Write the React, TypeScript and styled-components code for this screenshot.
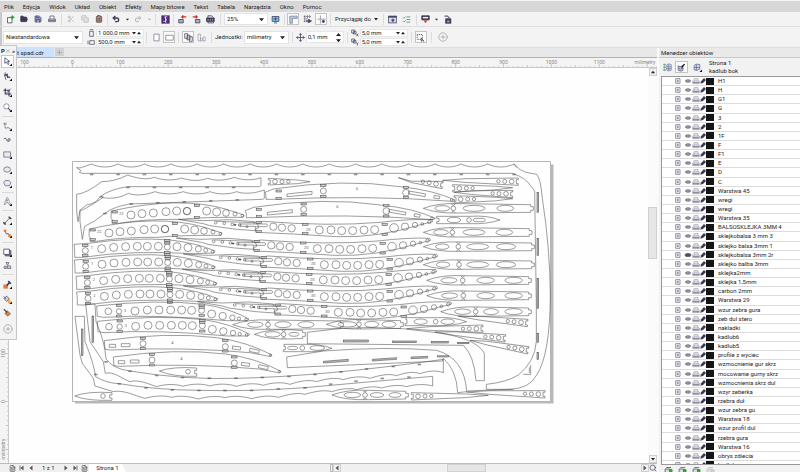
import React from "react";
import styled, { createGlobalStyle, css } from "styled-components";
import {
  FolderOpen, Save, Scissors, Copy, ClipboardList, Undo2, Redo2,
  ListChecks, CirclePlus, Search, Plus, X, Move, FileText,
} from "lucide-react";

const ink = "#3b3b58";

const GlobalStyle = createGlobalStyle`
  * { box-sizing: border-box; }
  html, body, #root { height: 100%; }
  body { margin: 0; overflow: hidden; }
  body, button, input, select { font-family: Roboto, "Liberation Sans", sans-serif; font-size: 6px; line-height: 8px; color: #1c1c1c; }
  button, input, select { margin: 0; padding: 0; border: 0; background: none; border-radius: 0; outline: 0; }
  svg { display: block; flex: none; }
  ul { list-style: none; margin: 0; padding: 0; }
`;

const Shell = styled.div`
  height: 100vh;
  display: flex;
  flex-direction: column;
  background: #f2f2f2;
`;
const MenuBar = styled.nav`
  display: flex;
  align-items: center;
  flex: none;
  gap: 9px;
  height: 12px;
  padding-left: 4px;
  border-top: 1px solid #f4f4f4;
  background: #d7d7d7;
`;
const MenuLink = styled.a`
  color: #1c1c1c;
  text-decoration: none;
  white-space: nowrap;
`;
const Bar = styled.div<{ $h: number }>`
  display: flex;
  align-items: center;
  flex: none;
  height: ${(p) => p.$h}px;
  padding-left: 3px;
  border-bottom: 1px solid #dedede;
  background: #f3f3f3;
`;
const Group = styled.div<{ $gap?: number; $w?: number; $ml?: number }>`
  display: flex;
  align-items: center;
  flex: none;
  gap: ${(p) => p.$gap ?? 0}px;
  width: ${(p) => (p.$w ? `${p.$w}px` : "auto")};
  margin-left: ${(p) => p.$ml ?? 0}px;
`;
const Stack = styled.div`
  display: flex;
  flex-direction: column;
  flex: none;
  gap: 1px;
`;
const Grip = styled.span`
  width: 2px;
  height: 100%;
  margin-left: -3px;
  margin-right: 1px;
  background: #c9c9c9;
`;
const Divider = styled.span<{ $m?: number }>`
  flex: none;
  width: 1px;
  height: 11px;
  margin: 0 ${(p) => p.$m ?? 2}px;
  background: #dcdcdc;
`;
const IconButton = styled.button<{ $w?: number; $boxed?: boolean; $dim?: boolean }>`
  display: flex;
  flex: none;
  align-items: center;
  justify-content: center;
  width: ${(p) => p.$w ?? 14}px;
  height: 12px;
  color: ${ink};
  opacity: ${(p) => (p.$dim ? 0.35 : 1)};
  ${(p) => p.$boxed && css`border: 1px solid #c4c4c4; background: #fbfbfb;`}
`;
const SelectBox = styled.label<{ $w: number; $h: number }>`
  display: flex;
  align-items: center;
  flex: none;
  width: ${(p) => p.$w}px;
  height: ${(p) => p.$h}px;
  padding: 0 3px 0 2px;
  border: 1px solid #e3e3e3;
  background: #fff;
  select { appearance: none; flex: 1; min-width: 0; }
`;
const Spin = styled.label<{ $w: number; $h: number }>`
  display: flex;
  align-items: center;
  flex: none;
  width: ${(p) => p.$w}px;
  height: ${(p) => p.$h}px;
  padding: 0 2px 0 1px;
  border: 1px solid #e6e6e6;
  background: #fff;
  input { flex: 1; min-width: 0; width: 10px; }
`;
const Caption = styled.span<{ $m?: number }>`
  flex: none;
  margin: 0 ${(p) => p.$m ?? 3}px;
  white-space: nowrap;
`;
const Main = styled.main`
  display: flex;
  flex: 1;
  min-height: 0;
`;
const DocArea = styled.section`
  position: relative;
  display: flex;
  flex-direction: column;
  flex: 1;
  min-width: 0;
`;
const TabStrip = styled.div`
  display: flex;
  flex: none;
  height: 10px;
  padding-left: 17px;
  background: #e8e8e8;
  border-bottom: 1px solid #7cc4e6;
`;
const DocTab = styled.button`
  width: 37px;
  background: #cbe1ff;
  white-space: nowrap;
  text-align: left;
`;
const AddTab = styled.button`
  display: flex;
  align-items: center;
  justify-content: center;
  width: 9px;
  height: 8px;
  margin-left: 1px;
  background: #d2d2d2;
  color: #999;
`;
const RulerRow = styled.div`
  flex: none;
  height: 10px;
  overflow: hidden;
  background: #f4f4f4;
  border-bottom: 1px solid #c9c9c9;
`;
const WorkRow = styled.div`
  display: flex;
  flex: 1;
  min-height: 0;
`;
const SideRuler = styled.div`
  width: 9px;
  flex: none;
  overflow: hidden;
  background: #f4f4f4;
  border-right: 1px solid #c9c9c9;
`;
const Canvas = styled.div`
  flex: 1;
  min-width: 0;
  overflow: hidden;
  background: #fefefe;
`;
const VScroll = styled.div`
  display: flex;
  flex-direction: column;
  justify-content: space-between;
  align-items: center;
  width: 9px;
  flex: none;
  background: #fbfbfb;
`;
const Thumb = styled.div<{ $vertical?: boolean }>`
  flex: none;
  width: ${(p) => (p.$vertical ? "9px" : "39px")};
  height: ${(p) => (p.$vertical ? "52px" : "8px")};
  background: #e6e6e6;
  border: 1px solid #d0d0d0;
`;
const ScrollButton = styled.button`
  display: flex;
  align-items: center;
  justify-content: center;
  flex: none;
  width: 8px;
  height: 8px;
  border: 1px solid #cfcfcf;
  background: #f1f1f1;
`;
const Spacer = styled.div<{ $grow: number }>`
  flex: ${(p) => p.$grow} 1 0;
`;
const StatusRow = styled.div`
  display: flex;
  flex: none;
  align-items: center;
  height: 9px;
  padding-left: 9px;
  background: #f0f0f0;
  border-top: 1px solid #bcbcbc;
`;
const PageTab = styled.button`
  width: 37px;
  height: 8px;
  background: #fff;
  clip-path: polygon(0 0, 90% 0, 100% 100%, 0 100%);
`;
const Handle = styled.span`
  width: 3px;
  height: 8px;
  border: 1px solid #bbb;
`;
const ToolBox = styled.aside`
  position: absolute;
  left: 0;
  top: -3px;
  display: flex;
  flex-direction: column;
  width: 17px;
  background: #f3f3f3;
  border: 1px solid #c6c6c6;
  border-left: 0;
`;
const ToolHead = styled.div`
  display: flex;
  align-items: center;
  justify-content: space-between;
  height: 9px;
  padding: 0 1px;
  overflow: hidden;
  font-weight: 700;
`;
const ToolButton = styled.button<{ $active?: boolean; $h: number }>`
  display: flex;
  align-items: center;
  justify-content: center;
  width: 13px;
  height: ${(p) => p.$h}px;
  margin-left: 1px;
  color: ${ink};
  ${(p) => p.$active && css`border: 1px solid #c8c8c8; background: #fff;`}
`;
const ToolRule = styled.span`
  height: 1px;
  margin: 2px 2px;
  background: #dadada;
`;
const Docker = styled.aside`
  display: flex;
  flex-direction: column;
  width: 143px;
  flex: none;
  border-left: 2px solid #fafafa;
`;
const DockerTitle = styled.h2`
  flex: none;
  height: 10px;
  margin: 0;
  padding: 1px 2px 0;
  font-size: 6px;
  line-height: 8px;
  font-weight: 400;
  background: #e9e9e9;
  border-bottom: 1px solid #c8c8c8;
`;
const DockerTools = styled.div`
  display: flex;
  align-items: center;
  flex: none;
  gap: 2px;
  height: 18px;
  padding-left: 2px;
`;
const DockerText = styled.div`
  margin-left: 3px;
`;
const LayerClip = styled.div`
  flex: 1;
  min-height: 0;
  margin-left: 2px;
  overflow: hidden;
  border: 1px solid #999;
  border-right: 0;
  background: #fff;
`;
const LayerList = styled.ul`
  display: flex;
  flex-direction: column;
  height: calc(100% + 6px);
`;
const LayerRow = styled.li`
  display: flex;
  align-items: center;
  flex: 1;
  min-height: 0;
  padding-left: 12px;
  border-bottom: 1px solid #dcdcdc;
  white-space: nowrap;
`;
const LayerButton = styled.button`
  display: flex;
  flex: none;
  height: 8px;
  align-items: center;
`;
const Swatch = styled.span`
  width: 8px;
  height: 7px;
  margin-right: 4px;
  background: #151515;
`;
const DockerFoot = styled.div`
  display: flex;
  flex: none;
  gap: 5px;
  height: 7px;
  padding: 1px 0 0 5px;
  overflow: hidden;
`;

type Kids = { children: React.ReactNode; s?: number };
const Glyph = ({ children, s = 9 }: Kids) => (
  <svg width={s} height={s} viewBox="0 0 24 24" fill="none" stroke={ink} strokeWidth={2}>{children}</svg>
);
const Down = ({ s = 5 }: { s?: number }) => (
  <svg width={s} height={s} viewBox="0 0 10 10"><path d="M0 2.500h10L5 8.500z" fill="#222" /></svg>
);
const Up = ({ s = 4 }: { s?: number }) => (
  <svg width={s} height={s} viewBox="0 0 10 10"><path d="M0 8h10L5 2z" fill="#222" /></svg>
);
const Tri = ({ left, bar }: { left?: boolean; bar?: boolean }) => (
  <svg width={6} height={6} viewBox="0 0 12 12">
    <path d={left ? "M9 1v10L3 6z" : "M3 1v10l6-5z"} fill="#555" />
    {bar && <path d={left ? "M2 1v10" : "M10 1v10"} stroke="#555" strokeWidth={1.5} />}
  </svg>
);

function MiniSpin({ label, value, w = 48 }: { label: string; value: string; w?: number }) {
  return (
    <Spin $w={w} $h={8}>
      <input aria-label={label} defaultValue={value} />
      <Group $gap={1}><Down s={4} /><Up s={4} /></Group>
    </Spin>
  );
}

function StandardBar() {
  return (
    <Bar $h={15}>
      <Grip />
      <IconButton aria-label="Nowy"><Glyph><path d="M4 7h12v14H4z" fill="#fff" /><path d="M17 1v10M12 6h10" stroke="#2f9d3c" strokeWidth={4} /></Glyph></IconButton>
      <IconButton aria-label="Otwórz"><FolderOpen size={8} fill={ink} /></IconButton>
      <IconButton aria-label="Zapisz"><Save size={8} fill="#9a9ad0" /></IconButton>
      <IconButton aria-label="Drukuj"><Glyph s={8}><path d="M6 11V3h12v8" fill="#fff" /><path d="M2 12h20v8H2z" fill="#eee" /><path d="M2 16h20" stroke="#222" /></Glyph></IconButton>
      <Divider />
      <IconButton aria-label="Wytnij" $dim><Scissors size={8} /></IconButton>
      <IconButton aria-label="Kopiuj" $dim><Copy size={8} fill="#bbb" /></IconButton>
      <IconButton aria-label="Wklej"><ClipboardList size={8} fill="#b88a62" /></IconButton>
      <Divider $m={1} />
      <IconButton aria-label="Cofnij"><Undo2 size={8} strokeWidth={4} /></IconButton>
      <IconButton aria-label="Lista cofania" $w={8}><Down s={3} /></IconButton>
      <IconButton aria-label="Ponów" $dim><Redo2 size={8} strokeWidth={3} /></IconButton>
      <IconButton aria-label="Lista ponawiania" $w={8} $dim><Down s={3} /></IconButton>
      <Divider />
      <IconButton aria-label="Szukaj zawartości"><Glyph><path d="M1 1h22v22H1z" fill="#4b2a75" stroke="none" /><path d="M17 5c-6-1-8 2-4 5s0 8-7 7M11 3l2 18" stroke="#fff" /></Glyph></IconButton>
      <Divider $m={1} />
      <IconButton aria-label="Importuj"><Glyph><path d="M2 12h12v9H2z" fill="#aab" /><path d="M22 5H11m3-4-4 4 4 4" stroke="#c92d25" strokeWidth={3} /></Glyph></IconButton>
      <IconButton aria-label="Eksportuj"><Glyph><path d="M9 12h12v9H9z" fill="#aab" /><path d="M2 5h11m-3-4 4 4-4 4" stroke="#c92d25" strokeWidth={3} /></Glyph></IconButton>
      <IconButton aria-label="Publikuj jako PDF"><Glyph><path d="M5 2h10l5 5v14H5z" fill="#ddd" /><path d="M1 8h21v9H1z" fill={ink} /><path d="M4 13h3m3 0h3m3 0h3" stroke="#fff" /></Glyph></IconButton>
      <Divider $m={3} />
      <SelectBox $w={44} $h={12}>
        <select aria-label="Powiększenie" defaultValue="25%"><option>25%</option></select><Down />
      </SelectBox>
      <IconButton aria-label="Pełny ekran"><Glyph><path d="M3 4h18v13H3zM8 21h8" fill="#73c3e6" /><path d="M12 6v9M7 10h10" /></Glyph></IconButton>
      <Divider />
      <IconButton aria-label="Linijki" $w={12} $boxed><Glyph><path d="M2 3h20v6H9v13H2z" fill="#b6c5dd" stroke="#7787a2" /></Glyph></IconButton>
      <IconButton aria-label="Siatka" $w={16}><Glyph><path d="M2 4h18M2 10h9M2 16h6M5 1v18M12 1v9M18 1v7" strokeDasharray="3 2" /><path d="M8 16q7-8 15 0-8 8-15 0" fill="#fff" /><circle cx="16" cy="16" r="3" fill={ink} /></Glyph></IconButton>
      <IconButton aria-label="Prowadnice" $w={12} $boxed><Glyph><path d="M9 1v22M1 11h22" stroke="#889" /><circle cx="17" cy="17" r="3" fill={ink} /></Glyph></IconButton>
      <Divider $m={3} />
      <Caption $m={1}>Przyciągaj do</Caption>
      <IconButton aria-label="Lista przyciągania" $w={9}><Down s={4} /></IconButton>
      <Divider $m={2} />
      <IconButton aria-label="Ekran powitalny"><Glyph><path d="M1 3h22v18H1z" fill="#d8d8ed" /><path d="M1 5h22" strokeWidth={4} /><circle cx="13" cy="14" r="3" fill="#57579a" /></Glyph></IconButton>
      <IconButton aria-label="Opcje"><ListChecks size={9} color="#448a53" /></IconButton>
      <Divider $m={2} />
      <IconButton aria-label="Uruchamianie aplikacji"><Glyph><path d="M2 2h20v11H2z" fill={ink} /><path d="M5 5h14v4H5z" fill="#eee" stroke="none" /><path d="M6 14h12l-6 8z" fill="#df4b2d" stroke="none" /></Glyph></IconButton>
      <IconButton aria-label="Lista aplikacji" $w={8}><Down s={3} /></IconButton>
      <IconButton aria-label="Społeczność"><Glyph><path d="M7 10h14v12H7z" fill={ink} /><path d="M4 3h8l6 6M5 20h4M10 15h8" stroke="#667" strokeWidth={3} /><path d="M11 18l6 0" stroke="#fff" /></Glyph></IconButton>
    </Bar>
  );
}

function PropertyBar() {
  return (
    <Bar $h={21}>
      <Grip />
      <SelectBox $w={80} $h={13}>
        <select aria-label="Rozmiar strony" defaultValue="n"><option value="n">Niestandardowa</option></select><Down />
      </SelectBox>
      <Group $gap={1} $ml={4}>
        <Stack>
          <Glyph s={8}><path d="M8 7h11v15H8zM8 2h11" /></Glyph>
          <Glyph s={8}><path d="M8 8h14v11H8zM3 8v11" /></Glyph>
        </Stack>
        <Stack>
          <MiniSpin label="Szerokość strony" value="1 000,0 mm" />
          <MiniSpin label="Wysokość strony" value="500,0 mm" />
        </Stack>
      </Group>
      <Divider />
      <IconButton aria-label="Pionowo"><Glyph><path d="M5 3h14v18H5z" fill="#fff" stroke="#778" /></Glyph></IconButton>
      <IconButton aria-label="Poziomo" $w={12} $boxed><Glyph><path d="M2 6h20v13H2z" fill="#fff" stroke="#778" /></Glyph></IconButton>
      <Divider $m={3} />
      <IconButton aria-label="Wszystkie strony" $w={12} $boxed><Glyph><path d="M2 2h8v12H2zM8 6h8v12H8zM14 10h8v12h-8z" fill="#fff" /></Glyph></IconButton>
      <IconButton aria-label="Bieżąca strona" $w={15}><Glyph><path d="M3 3h6v18H3zM9 15h6v6H9zM16 11h6v10h-6z" stroke="#99a" fill="#fff" /></Glyph></IconButton>
      <Divider $m={2} />
      <Caption $m={1}>Jednostki:</Caption>
      <SelectBox $w={45} $h={13}>
        <select aria-label="Jednostki" defaultValue="m"><option value="m">milimetry</option></select><Down />
      </SelectBox>
      <Divider $m={3} />
      <Group $gap={1}>
        <Move size={9} color={ink} />
        <Spin $w={38} $h={12}>
          <input aria-label="Przesunięcie" defaultValue="0,1 mm" />
          <Stack><Up s={5} /><Down s={5} /></Stack>
        </Spin>
      </Group>
      <Divider $m={3} />
      <Group $gap={1} $w={57}>
        <Stack>
          <Glyph s={8}><path d="M2 3h9v9H2zM7 7h8v8H7zM16 14l6 8m0-8-6 8" /></Glyph>
          <Glyph s={8}><path d="M2 3h9v9H2zM7 7h8v8H7zM16 14l3 4 3-4m-3 4v5" /></Glyph>
        </Stack>
        <Stack>
          <MiniSpin label="Odległość duplikatu x" value="5,0 mm" />
          <MiniSpin label="Odległość duplikatu y" value="5,0 mm" />
        </Stack>
      </Group>
      <Divider $m={3} />
      <IconButton aria-label="Traktuj jako wypełnione" $w={12} $boxed><Glyph><path d="M3 4h14v13H3z" strokeDasharray="3 2" /><path d="M14 13v9l3-2 4 2z" fill="#fff" /></Glyph></IconButton>
      <Divider $m={4} />
      <IconButton aria-label="Dostosuj"><CirclePlus size={10} color="#a8a8a8" /></IconButton>
    </Bar>
  );
}

const Flyout = () => <path d="M24 17v7h-7z" fill="#111" stroke="none" />;

function Tools() {
  const tools: { n: string; h: number; rule?: boolean; active?: boolean; icon: React.ReactNode }[] = [
    { n: "Wskaźnik", h: 13, active: true, icon: <><path d="M5 2v15l4-4 4 7 3-2-4-6h6z" fill="#fff" /><Flyout /></> },
    { n: "Kształt", h: 16, icon: <><path d="M6 1q-4 9 2 20" /><path d="M4 8l8-3v11l3-3 4 2z" fill="#778" /><Flyout /></> },
    { n: "Kadrowanie", h: 16, icon: <><path d="M6 1v15h16M1 6h15v16" strokeWidth={3} /><path d="m8 15 12-13" /><Flyout /></> },
    { n: "Powiększenie", h: 14, rule: true, icon: <><circle cx="9" cy="9" r="7" fill="#fff" stroke="#778" /><path d="m14 14 7 8" strokeWidth={3} /><Flyout /></> },
    { n: "Krzywa", h: 14, icon: <><path d="M5 1v9M1 5h9M5 11q0 8 5 5t6 0 5 3" stroke="#667" /><Flyout /></> },
    { n: "Środki artystyczne", h: 14, icon: <path d="M2 8q5-6 7 1t7 5q6-2 2-7-6-2-4 7" strokeWidth={2} /> },
    { n: "Prostokąt", h: 15, icon: <><path d="M2 5h18v14H2z" fill="#e9e9f2" stroke="#667" /><Flyout /></> },
    { n: "Elipsa", h: 14, icon: <><ellipse cx="11" cy="12" rx="9" ry="7" fill="#e9e9f2" stroke="#667" /><Flyout /></> },
    { n: "Wielokąt", h: 14, rule: true, icon: <><path d="m6 4 10 0 5 6-4 8H6l-4-8z" fill="#e9e9f2" stroke="#667" /><Flyout /></> },
    { n: "Tekst", h: 13, rule: true, icon: <><path d="M3 20 10 2h3l7 18h-4l-2-5H8l-2 5zM9 11h4l-2-5z" fill="#fff" strokeWidth={1.5} stroke="#667" /><Flyout /></> },
    { n: "Wymiar równoległy", h: 14, icon: <><path d="m3 21 16-17" /><path d="M1 17l6 6M15 2l7 6" strokeWidth={4} /><Flyout /></> },
    { n: "Łącznik", h: 13, rule: true, icon: <><path d="M5 5l4 8 5-1 4 7" /><path d="M2 1h7v7H2zM14 14h7v7h-7z" fill="#ed842b" stroke="none" /><Flyout /></> },
    { n: "Cień", h: 14, icon: <><path d="M6 7h15v14H6z" fill="#889" /><path d="M2 3h15v14H2z" fill="#fff" /><Flyout /></> },
    { n: "Przezroczystość", h: 13, rule: true, icon: <><path d="M8 4h8l-4 8zM3 14h6v6H3zM12 13h8l1 7h-9z" fill="#ccd" stroke="#667" /></> },
    { n: "Kroplomierz", h: 15, icon: <><path d="M1 12h12v11H1z" fill="#ed762b" stroke="none" /><path d="m10 15 9-10M14 3l7 7" strokeWidth={4} /><Flyout /></> },
    { n: "Wypełnienie", h: 14, icon: <><path d="m9 3 8 7-7 7-7-7z" fill="#dde" /><path d="M13 14h7v8h-7z" fill="#f5a92c" stroke="none" /><path d="M2 4l7 7" /><Flyout /></> },
    { n: "Inteligentne wypełnienie", h: 13, icon: <><path d="m11 7 9 8-7 7-8-7z" fill="#e37a2e" stroke="#775" /><path d="M2 3l9 9" strokeWidth={3} /></> },
  ];
  return (
    <ToolBox aria-label="Przybornik">
      <ToolHead><span>P</span><X size={6} color="#888" /><span>»</span></ToolHead>
      {tools.map((t) => (
        <React.Fragment key={t.n}>
          <ToolButton aria-label={t.n} $active={t.active} $h={t.h}><Glyph s={9}>{t.icon}</Glyph></ToolButton>
          {t.rule && <ToolRule />}
        </React.Fragment>
      ))}
      <ToolButton aria-label="Dostosuj przybornik" $h={20}><CirclePlus size={10} color="#a8a8a8" /></ToolButton>
    </ToolBox>
  );
}

const range = (n: number) => Array.from({ length: n }, (_, i) => i);

function TopRuler() {
  return (
    <svg width="100%" height={10} fontSize={5} fill="#888" textAnchor="middle">
      {range(140).map((i) => {
        const x = 24.5 + (i - 4) * 4.79;
        const major = (i - 4) % 10 === 0;
        return <path key={i} d={`M${x} ${major ? 6 : (i - 4) % 5 === 0 ? 7 : 8}v4`} stroke="#b5b5b5" strokeWidth={0.7} />;
      })}
      {range(13).map((i) => <text key={i} x={24.5 + i * 47.9} y={6}>{Math.abs(i - 1) * 100}</text>)}
      <text x={645} y={6}>milimetry</text>
    </svg>
  );
}

function LeftRuler() {
  return (
    <svg width={9} height="100%" fontSize={5} fill="#888" textAnchor="middle">
      {range(84).map((i) => {
        const k = i - 70;
        return <path key={i} d={`M${k % 10 === 0 ? 5 : k % 5 === 0 ? 6 : 7} ${333.5 + k * 4.79}h5`} stroke="#b5b5b5" strokeWidth={0.7} />;
      })}
      {([[285.5, "100"], [333.5, "0"], [381, "milimetry"]] as [number, string][]).map(([y, t]) => (
        <text key={t} transform={`translate(5 ${y}) rotate(-90)`}>{t}</text>
      ))}
    </svg>
  );
}

type Pt = [number, number];
const Holes = ({ at }: { at: [number, number, number][] }) => (
  <>{at.map(([x, y, r]) => <circle key={`${x}-${y}`} cx={x} cy={y} r={r} />)}</>
);
const Boxes = ({ at }: { at: Pt[] }) => (
  <>{at.map(([x, y]) => <rect key={`${x}-${y}`} x={x - 8} y={y - 3} width={16} height={6} fill="#ccc" />)}</>
);
const Notches = ({ at }: { at: Pt[] }) => (
  <>{at.map(([x, y]) => <path key={`${x}-${y}`} d={`M${x - 4} ${y - 2}v4h3v-4m2 0v4h3v-4`} />)}</>
);
const At = ({ p, children }: { p: Pt; children: React.ReactNode }) => <g transform={`translate(${p[0]} ${p[1]})`}>{children}</g>;
const Mark = ({ x, y, t }: { x: number; y: number; t: string }) => <text x={x} y={y} fontSize={12} stroke="none" fill="#666">{t}</text>;

const scallop = (points: Pt[], depth = 9) =>
  points.slice(1).map(([x, y], i) => {
    const [px, py] = points[i];
    const w = x - px;
    return `C${px + w * 0.3} ${py + depth} ${px + w * 0.7} ${y + depth} ${x} ${y}`;
  }).join("");

const NoseRib = ({ p }: { p: Pt }) => (
  <At p={p}>
    <path d="M124 168Q330 122 470 163L522 180 519 187Q400 186 330 193 220 192 145 205L127 206V194L123 190Z" />
    <Holes at={[[183, 180, 12], [216, 176, 12], [250, 174, 12], [288, 170, 12], [320, 168, 12], [351, 168, 11], [351, 168.5, 11], [410, 168, 12], [440, 171, 12], [468, 174, 10], [495, 177, 6], [517, 182, 4]]} />
    <Boxes at={[[134, 171], [134, 200], [381, 152], [381, 187]]} />
    <Mark x={147} y={181} t="22" />
  </At>
);
const WingRib = ({ p, n }: { p: Pt; n: string }) => (
  <At p={p}>
    <path d="M12 268L55 265Q190 246 300 255 380 264 435 288L432 294 372 296Q180 285 38 307H14V290Z" />
    <Holes at={[[46, 287, 9], [95, 281, 12], [131, 277, 12], [167, 275, 12], [202, 274, 12], [232, 274, 12], [265, 274, 12], [292, 276, 9], [321, 275, 12], [354, 278, 12], [385, 282, 9], [407, 286, 6], [428, 290, 4]]} />
    <Boxes at={[[46, 272], [46, 302], [292, 257], [292, 264], [292, 292], [292, 299]]} />
    <Mark x={62} y={282} t={n} />
  </At>
);
const LongRib = ({ p }: { p: Pt }) => (
  <At p={p}>
    <path d="M80 453Q260 432 400 448 480 460 537 492L532 497H470Q260 477 100 487L82 484Z" />
    <Holes at={[[115, 469, 10], [147, 469, 8], [195, 468, 12], [232, 465, 12], [267, 465, 12], [302, 465, 12], [335, 465, 12], [365, 466, 12], [395, 466, 9], [425, 477, 12], [458, 483, 11], [487, 488, 8], [507, 491, 5], [528, 494, 4]]} />
    <Boxes at={[[147, 452], [147, 483], [395, 450], [395, 457], [395, 482]]} />
    <Mark x={162} y={470} t="3" />
  </At>
);
const PlainRib = ({ p }: { p: Pt }) => (
  <At p={p}>
    <path d="M103 557Q290 530 440 548 530 560 606 600L603 605 540 593Q340 575 122 585L105 583Z" />
    <path d="M118 568h19v9h-19zM154 566h26v9h-26zM488 573l24 3-1 9-24-3zM540 580l28 6-2 9-28-6z" />
    <Holes at={[[219, 566, 9], [466, 575, 9], [601, 600, 3]]} />
    <Boxes at={[[219, 550], [219, 581], [466, 557], [466, 588]]} />
    <Mark x={304} y={567} t="4" />
  </At>
);
const BigRib = ({ p }: { p: Pt }) => (
  <At p={p}>
    <path d="M585 112L610 102Q820 70 990 95 1090 105 1155 135L1148 139Q900 120 610 133H588V122Z" />
    <path d="M651 117l75-8v9l-75 7zM1017 108l50 9-2 8-50-9zM1093 121l17 3-2 8-17-3z" />
    <Holes at={[[760, 108, 9], [1008, 113, 10], [1145, 135, 4]]} />
    <Boxes at={[[626, 108], [626, 130], [760, 92], [760, 124], [1008, 97], [1008, 128]]} />
    <Mark x={858} y={105} t="6" />
  </At>
);
const TailRib = ({ p, n }: { p: Pt; n: string }) => (
  <At p={p}>
    <path d="M557 202L580 199Q780 215 930 202 1020 191 1085 194L1088 200 1060 207Q920 250 800 245 670 236 558 232L557 222 565 219V212Z" />
    <Holes at={[[610, 215, 11], [636, 218, 11], [665, 220, 11], [748, 225, 12], [783, 225, 12], [815, 227, 12], [848, 227, 12], [882, 225, 12], [914, 224, 12], [972, 219, 13], [1005, 215, 11], [1035, 210, 8], [1057, 207, 4], [1078, 201, 5]]} />
    <Boxes at={[[566, 203], [566, 230], [706, 208], [706, 236], [944, 209], [944, 238]]} />
    <Mark x={708} y={227} t={n} />
    <path d="M325 193L400 197 480 194 553 200V207H590Q597 211 590 215H556V227L500 223 420 212 400 206Z M553 207H510V214H556M440 199L555 203" />
    <Holes at={[[437, 203, 4], [463, 205, 4], [487, 208, 4], [509, 210, 4], [531, 215, 3]]} />
    <path d="M492 208h6v3h-6z" fill="#555" />
  </At>
);

type LensShape = { tip: number; y: number; end: number; holes: [number, number][]; r?: number };
const Lens = ({ tip, y, end, holes, r = 9 }: LensShape) => (
  <g>
    <path d={`M${tip} ${y}Q${tip + 45} ${y - 17} ${tip + 110} ${y - 14}L${end - 8} ${y - 11}V${y - 5}H${end}V${y + 6}H${end - 8}V${y + 12}L${tip + 110} ${y + 14}Q${tip + 40} ${y + 16} ${tip} ${y}Z`} />
    {holes.map(([x, rx], i) =>
      rx < 9 ? (
        <g key={i}>
          <circle cx={x} cy={y} r={rx} />
          <path d={`M${x - 6} ${y - 13}q6 8 12 0M${x - 6} ${y + 13}q6-8 12 0`} />
        </g>
      ) : (
        <ellipse key={i} cx={x} cy={y} rx={rx} ry={i === 0 ? 8 : r} />
      ),
    )}
  </g>
);
const lenses: LensShape[] = [
  { tip: 1060, y: 160, end: 1390, holes: [[1117, 22], [1150, 7], [1212, 33], [1306, 25]] },
  { tip: 1060, y: 232, end: 1386, holes: [[1113, 22], [1147, 7], [1212, 33], [1303, 25]] },
  { tip: 1060, y: 275, end: 1393, holes: [[1117, 20], [1165, 7], [1223, 33], [1308, 29]] },
  { tip: 1060, y: 329, end: 1393, holes: [[1119, 20], [1167, 7], [1223, 33], [1308, 29]] },
  { tip: 1070, y: 376, end: 1384, holes: [[1137, 24], [1178, 7], [1247, 26], [1331, 26]] },
  { tip: 1070, y: 422, end: 1384, holes: [[1139, 24], [1180, 7], [1247, 26], [1331, 26]] },
  { tip: 1112, y: 470, end: 1384, holes: [[1178, 24], [1217, 7], [1263, 22], [1331, 26]] },
  { tip: 488, y: 509, end: 820, holes: [[556, 23], [594, 7], [639, 24], [708, 24]] },
  { tip: 553, y: 538, end: 706, r: 6, holes: [[608, 23], [641, 7], [672, 15]] },
  { tip: 769, y: 508, end: 1000, holes: [[832, 28], [867, 7], [905, 21], [957, 21]] },
  { tip: 786, y: 720, end: 1015, r: 7, holes: [[847, 25], [885, 7], [921, 20], [975, 18]] },
];

const Taper = ({ a, b, h = 22, flip }: { a: Pt; b: Pt; h?: number; flip?: boolean }) => {
  const deg = (Math.atan2(b[1] - a[1], b[0] - a[0]) * 180) / Math.PI;
  const len = Math.hypot(b[0] - a[0], b[1] - a[1]);
  const k = h / 2;
  return (
    <g transform={`translate(${a[0]} ${a[1]}) rotate(${deg})`}>
      <path d={`M0 0L${len * 0.3} ${flip ? 4 : -6} ${len} ${-k}v5h-6v${h - 10}h6v5L${len * 0.3} ${flip ? 8 : 5}Z`} />
      <Holes at={[[len - 20, 0, 7], [len - 41, 0, 6], [len - 60, 0, 5]]} />
    </g>
  );
};
const Slots = ({ at }: { at: [number, number, number, number][] }) => (
  <>{at.map(([x, y, w, h]) => <rect key={`${x}-${y}`} x={x} y={y} width={w} height={h} fill="#bbb" />)}</>
);

const step = (from: Pt, n: number, dx = 79.2, dy = 0): Pt[] => range(n).map((i) => [from[0] + i * dx, from[1] + i * dy] as Pt);

function Drawing() {
  return (
    <svg width="100%" height="100%" role="img" aria-label="Rysunek części">
      <path d="M66 96.500H544.500V335.500H66z" fill="#b9b9b9" />
      <path d="M63.500 93.500H541.500V333.500H63.500z" fill="#fefefe" stroke="#b5b5b5" strokeWidth={1} />
      <g transform="translate(61 87) scale(.333333)" fill="none" stroke="#484848" strokeWidth={1.6}>
        <path d={`M20 38L30 39 65 27${scallop(step([65, 27], 17), 12)}Q1350 48 1368 52L1400 58Q1412 70 1417 130 1440 280 1441 420 1440 600 1400 660 1380 700 1320 703L1192 708M1332 27L1340 38M20 38L33 47 28 52 36 55H1328Q1370 70 1383 94L1394 108 1399 450V560Q1395 620 1345 660 1310 682 1249 688V703H1330`} />
        <Notches at={step([65, 58], 17)} />

        <path d={`M173 60${scallop([[173, 60], [253, 67], [335, 69], [413, 70], [493, 67], [573, 68]])}V92L568 95H173Q120 103 90 125 80 145 50 150L30 165 24 200 20 170V118Q50 115 95 80 135 80 173 60`} />
        <Notches at={step([174, 97], 5)} />
        <path d={`M175 115${scallop([[175, 115], [255, 110], [340, 110], [420, 110], [500, 110], [583, 105]])}V130L578 133 180 147Q130 155 105 175 75 200 44 214L37 253 30 200V168Q60 155 98 128 140 135 175 115`} />
        <Notches at={step([184, 146], 5, 79.5, -3)} />
        <Notches at={[[95, 125], [105, 175]]} />

        <NoseRib p={[0, 0]} />
        <NoseRib p={[-66, 54]} />
        <WingRib p={[0, 0]} n="1" />
        <WingRib p={[1, 47]} n="1" />
        <WingRib p={[6, 96]} n="2" />
        <WingRib p={[8, 143]} n="2" />
        <LongRib p={[0, 0]} />
        <LongRib p={[2, 46]} />
        <PlainRib p={[0, 0]} />
        <PlainRib p={[27, 49]} />
        <BigRib p={[0, 0]} />
        <BigRib p={[-59, 55]} />
        <TailRib p={[0, 0]} n="20" />
        <TailRib p={[-6, 56]} n="20" />
        <TailRib p={[15, 104]} n="20" />
        <TailRib p={[12, 150]} n="20" />
        <TailRib p={[15, 200]} n="30" />
        <TailRib p={[57, 247]} n="30" />

        {lenses.map((l) => <Lens key={`${l.tip}-${l.y}`} {...l} />)}
        <path d="M1100 184H1200Q1250 180 1290 195 1250 208 1200 206H1100V200H1107V190H1100ZM1215 190h25q12 5 0 10h-25q-12-5 0-10" />
        <ellipse cx={1152} cy={195} rx={20} ry={8} />
        <circle cx={1197} cy={195} r={7} />

        <Taper a={[720, 80]} b={[595, 80]} h={20} />
        <Taper a={[985, 68]} b={[1118, 90]} flip />
        <Taper a={[1118, 76]} b={[1345, 80]} />
        <Taper a={[1328, 98]} b={[1148, 100]} />
        <Taper a={[1152, 112]} b={[1328, 117]} />
        <Taper a={[1328, 131]} b={[1152, 133]} />
        <Taper a={[1165, 484]} b={[1373, 504]} />
        <Taper a={[1010, 521]} b={[1239, 521]} />
        <Taper a={[1095, 531]} b={[1306, 550]} />
        <Taper a={[1200, 556]} b={[1375, 586]} />
        <Taper a={[1190, 711]} b={[1425, 718]} />
        <Taper a={[1255, 721]} b={[1024, 724]} />

        <path d="M1008 488H1100Q1150 485 1190 500 1150 513 1100 512H1005V506H1011V494H1008Z" />
        <ellipse cx={1052} cy={500} rx={20} ry={8} />
        <circle cx={1097} cy={500} r={7} />
        <ellipse cx={1133} cy={500} rx={20} ry={8} />
        <path d="M642 568H700Q750 566 786 580 750 592 700 590H640V584H646V574H642Z" />
        <ellipse cx={668} cy={579} rx={16} ry={5} />
        <circle cx={697} cy={579} r={7} />
        <ellipse cx={742} cy={579} rx={22} ry={7} />
        <path d="M268 648Q310 634 380 639V646H374V656H380V664Q310 666 268 648ZM14 723Q55 708 126 713V720H119V729H126V736Q50 738 14 723Z" />
        <Holes at={[[354, 650, 7], [99, 723, 7]]} />

        <path d="M712 532Q900 502 1100 533 1220 550 1243 595V677H1218Q1212 600 1180 571L712 566Z" />
        <path d="M650 606L760 588Q950 574 1100 586 1184 610 1190 710L1163 713Q1160 645 1120 610L1118 618 652 638Z" />
        <Slots at={[[820, 555, 75, 6], [967, 558, 73, 5], [1085, 559, 50, 5], [1162, 562, 35, 4], [1401, 112, 5, 60], [1401, 250, 5, 52], [1401, 370, 5, 90], [1401, 535, 5, 27], [1401, 592, 5, 22], [34, 522, 5, 80], [66, 483, 5, 80]]} />
        <path d="M760 619l75-6v6l-75 5zM907 613l73-5v5l-73 5zM1023 606l50-2v5l-50 2zM1102 602h34v4h-34z" fill="#bbb" />
        <path d="M1360 658h22v-28M1378 637v17" />

        <path d="M15 484H43L45 560Q70 620 77 665 110 685 148 686 260 705 387 706 540 710 705 698 900 680 1088 664V693" />
        <path d={`M15 484L30 600 37 625 70 670 75 693 130 710${scallop([[130, 710], [225, 730], [305, 727], [385, 732], [465, 728], [545, 731], [625, 727], [705, 718], [785, 710], [860, 704], [935, 699], [1010, 695], [1088, 693]], -7)}`} />
        <path d="M47 447H75L78 500Q105 560 108 612 130 642 180 648 340 675 500 670 760 664 1120 613V653" />
        <path d={`M47 447L60 560 100 620 106 655${scallop([[106, 655], [180, 680], [260, 695], [340, 694], [420, 693], [500, 694], [580, 691], [660, 688], [740, 680], [820, 674], [900, 670], [980, 662], [1050, 656], [1120, 653]], -8)}`} />
        <Notches at={[[108, 620], [180, 648], [260, 661], [338, 667], [418, 669], [498, 669], [577, 667], [657, 664], [735, 658], [813, 650], [890, 641], [970, 634], [1048, 628], [77, 658], [148, 686], [228, 698], [307, 704], [387, 706], [465, 706], [545, 706], [625, 701], [705, 698], [782, 687], [858, 678], [937, 670], [1017, 666]]} />
      </g>
    </svg>
  );
}

const layers = [
  "H1", "H", "G1", "G", "3", "2", "1F", "F", "F1", "E", "D", "C", "Warstwa 45", "wregi", "wregi", "Warstwa 35",
  "BALSOSKLEJKA 3MM 4", "sklejkobalsa 3 mm 3", "sklejko balsa 3mm 1", "sklejkobalsa 3mm 2r", "sklejko balba 3mm",
  "sklejka2mm", "sklejka 1,5mm", "carbon 2mm", "Warstwa 29", "wzur zebra gura", "zeb dul stero", "nakladki",
  "kadlub6", "kadlub5", "profile z wyciec", "wzmocnienie gur skrz", "mocowanie gurny skrz", "wzmocnienia skrz dul",
  "wzyr zeberka", "rzebra duł", "wzur zebra gu", "Warstwa 18", "wzur profil dul", "rzebra gura", "Warstwa 16",
  "obrys zdiecia", "kadlub",
];

function Layer({ name, open }: { name: string; open: boolean }) {
  return (
    <LayerRow>
      <LayerButton aria-label={`Rozwiń ${name}`}>
        <svg width={10} height={8} viewBox="0 0 30 24" fill="none" stroke="#5a5a7c" strokeWidth={2}><path d="M5 5h13v14H5zM11.5 8v8M8 12h7" /></svg>
      </LayerButton>
      <LayerButton aria-label={`Widoczność ${name}`}>
        <svg width={8} height={8} viewBox="0 0 24 24"><ellipse cx="12" cy="12" rx="8" ry="4" fill={open ? "#334" : "#bbc"} stroke="#667" strokeWidth={open ? 4 : 2} /><path d="M6 12h12" stroke="#556" strokeWidth={2} /></svg>
      </LayerButton>
      <LayerButton aria-label={`Drukowanie ${name}`}>
        <svg width={8} height={8} viewBox="0 0 24 24" fill="#eee" stroke="#99a" strokeWidth={2}><path d="M6 12V5h12v7M2 12h20v8H2z" /><path d="M3 17h18" stroke="#445" /></svg>
      </LayerButton>
      <LayerButton aria-label={`Edycja ${name}`}>
        <svg width={6} height={8} viewBox="0 0 18 24" fill={ink}><path d="M1 20l2-7L12 3l6 6-9 9z" /></svg>
      </LayerButton>
      <Swatch />
      {name}
    </LayerRow>
  );
}

function ObjectManager() {
  return (
    <Docker>
      <DockerTitle>Menedzer obiektów</DockerTitle>
      <DockerTools>
        <IconButton aria-label="Właściwości obiektu" $w={12}><Glyph><path d="M2 3h4v3H2zM2 10h4v3H2zM2 17h4v3H2z" fill="#5a9" stroke="#5a9" /><path d="M10 5l5-3 7 2v15l-7 2-5-2zM10 10h12M10 15h12M15 3v18" fill="#cde" stroke="#668" strokeWidth={1.5} /></Glyph></IconButton>
        <IconButton aria-label="Edytuj między warstwami" $w={13} $boxed><Glyph><path d="M3 7l5 3 8-3v13l-7 2-6-3zM3 13l6 3 7-3" fill="#abc" stroke="#668" /><path d="m12 12 8-9" strokeWidth={4} stroke="#223" /></Glyph></IconButton>
        <IconButton aria-label="Widok menedżera warstw" $w={14}><Glyph><path d="M3 7l5-4 10 1v12l-9 4-6-2zM3 12h15M9 4v16" fill="#cde" stroke="#668" /><Flyout /></Glyph></IconButton>
        <DockerText>Strona 1<br />kadlub bok</DockerText>
      </DockerTools>
      <LayerClip>
        <LayerList>
          {layers.map((n, i) => <Layer key={i} name={n} open={i === 19} />)}
        </LayerList>
      </LayerClip>
      <DockerFoot>
        {["#444", "#367", "#367", "#bbb"].map((c, i) => (
          <Glyph key={i} s={9}><path d="M3 8h12v12H3zM6 4h13" stroke={c} fill="#ddd" /><circle cx="18" cy="12" r="5" fill={i === 3 ? "#ccc" : "#3d9b47"} stroke="none" /></Glyph>
        ))}
      </DockerFoot>
    </Docker>
  );
}

export default function App() {
  return (
    <Shell>
      <GlobalStyle />
      <MenuBar>
        {["Plik", "Edycja", "Widok", "Układ", "Obiekt", "Efekty", "Mapy bitowe", "Tekst", "Tabela", "Narzędzia", "Okno", "Pomoc"].map((m) => (
          <MenuLink key={m} href="#">{m}</MenuLink>
        ))}
      </MenuBar>
      <StandardBar />
      <PropertyBar />
      <Main>
        <DocArea>
          <TabStrip>
            <DocTab>t spad.cdr</DocTab>
            <AddTab aria-label="Nowa karta"><Plus size={7} /></AddTab>
          </TabStrip>
          <RulerRow><TopRuler /></RulerRow>
          <WorkRow>
            <SideRuler><LeftRuler /></SideRuler>
            <Canvas><Drawing /></Canvas>
            <VScroll>
              <ScrollButton aria-label="W górę"><Up /></ScrollButton>
              <Spacer $grow={131} />
              <Thumb $vertical />
              <Spacer $grow={197} />
              <ScrollButton aria-label="W dół"><Down s={4} /></ScrollButton>
            </VScroll>
          </WorkRow>
          <StatusRow>
            <Group $w={80} $gap={3}>
              <FileText size={7} color="#333" />
              <Tri left bar />
              <Tri left />
              <Caption $m={5}>1 z 1</Caption>
              <Tri />
              <Tri bar />
              <FileText size={7} color="#333" />
            </Group>
            <PageTab>Strona 1</PageTab>
            <Spacer $grow={203} />
            <Handle />
            <ScrollButton aria-label="W lewo"><Tri left /></ScrollButton>
            <Spacer $grow={106} />
            <Thumb />
            <Spacer $grow={154} />
            <ScrollButton aria-label="W prawo"><Tri /></ScrollButton>
            <Search size={8} color={ink} />
          </StatusRow>
          <Tools />
        </DocArea>
        <ObjectManager />
      </Main>
    </Shell>
  );
}
